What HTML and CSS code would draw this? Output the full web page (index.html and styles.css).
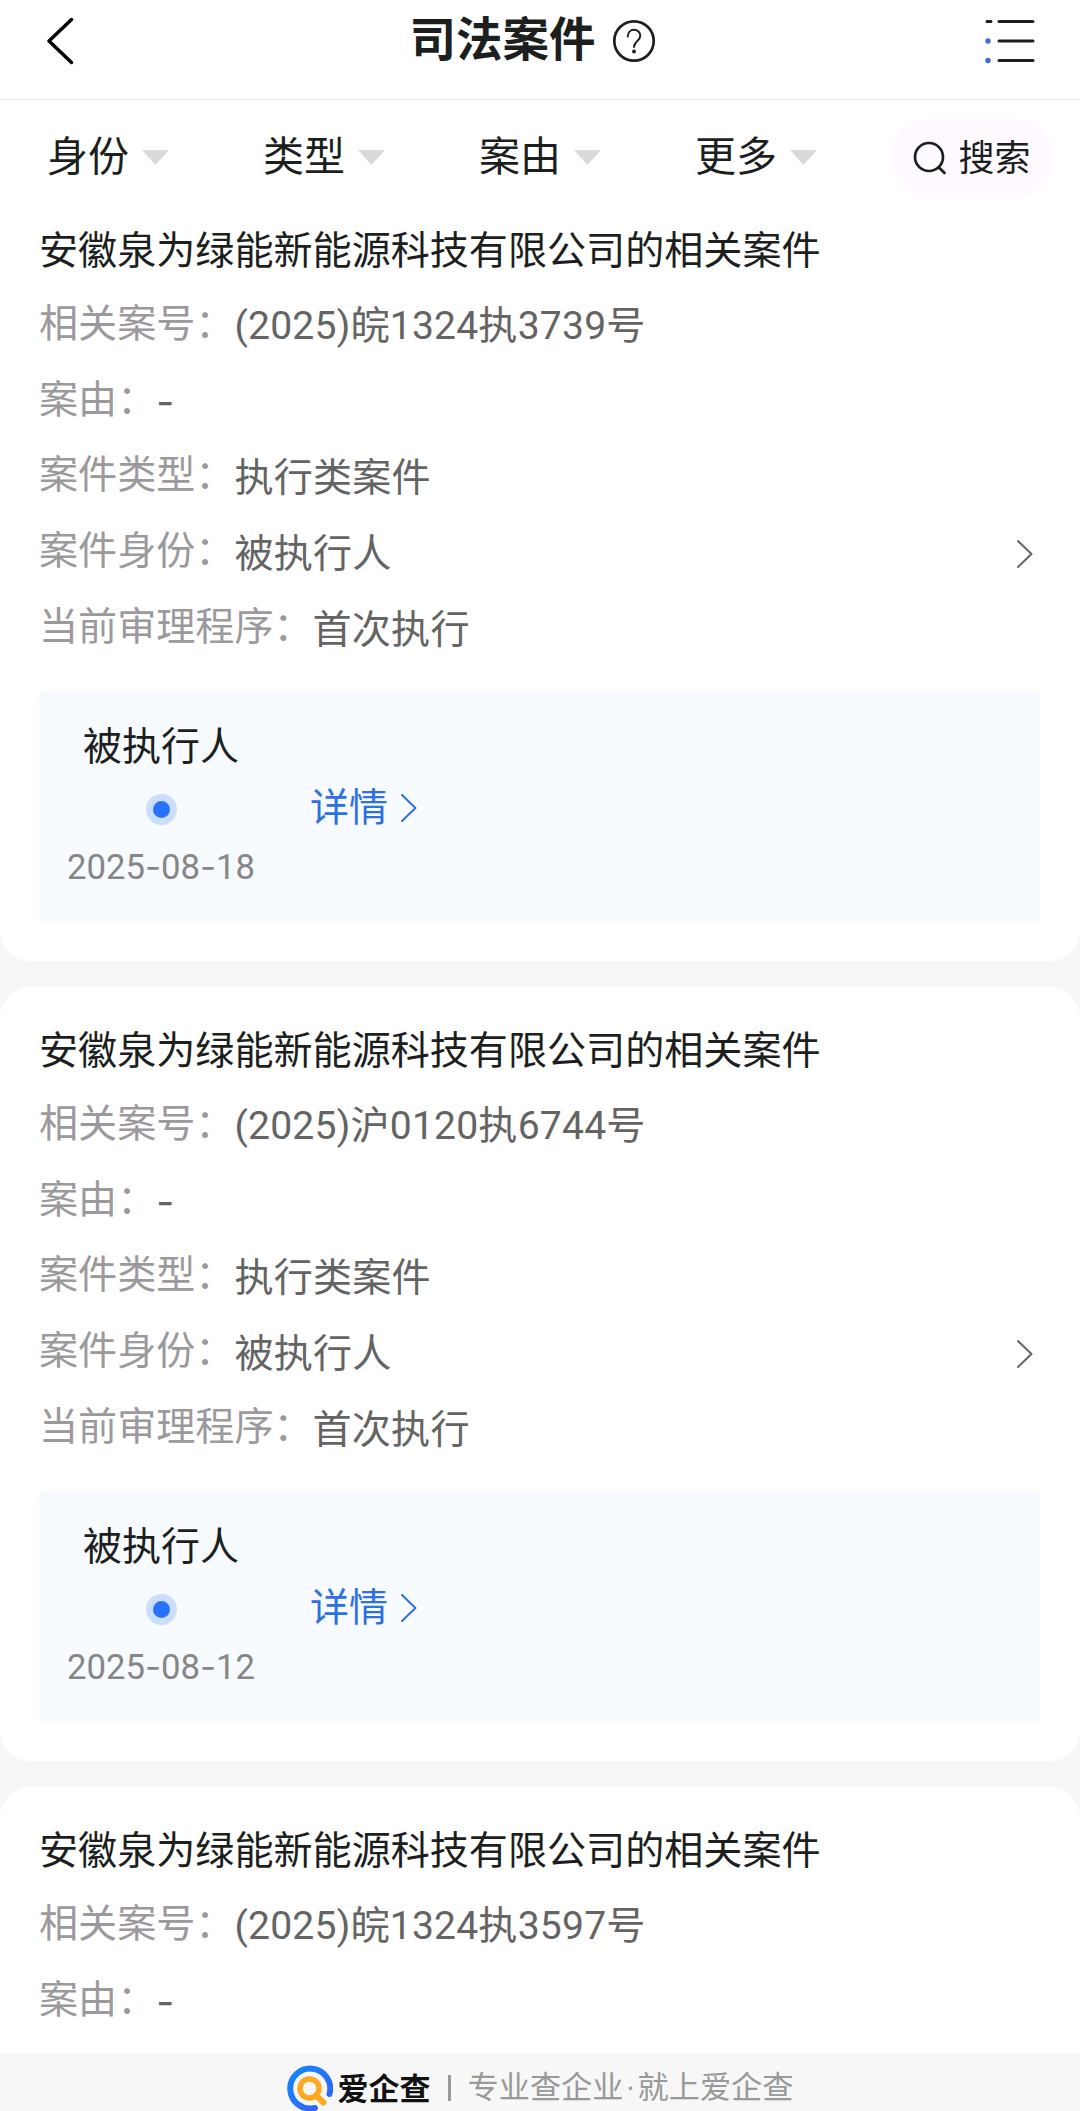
FILE: index.html
```
<!DOCTYPE html>
<html lang="zh-CN">

<head>
    <meta charset="UTF-8">
    <meta name="viewport" content="width=device-width, initial-scale=1.0">
    <title>司法案件</title>
    <link rel="stylesheet" href="styles.css">
</head>

<body>
    <div class="header">
        <svg class="back" viewBox="0 0 28 48"><path d="M25.500 2.500L3 24L25.500 45.500" /></svg>
        <div class="header-title">
            <h1>司法案件</h1>
            <svg class="help" viewBox="0 0 44 44">
                <circle cx="22" cy="22" r="19.700" />
                <path class="thin" d="M15.800 17.500c0-4 2.700-6.700 6.200-6.700s6.300 2.600 6.300 6c0 5-6.300 5.500-6.300 11.200" />
                <circle class="dot" cx="22" cy="32.500" r="2" />
            </svg>
        </div>
        <svg class="menu" viewBox="0 0 52 46">
            <path d="M3 3.500h4M15 3.500h34M15 23h34M15 42.500h34" />
            <circle cx="4" cy="23" r="2.700" />
            <circle cx="4" cy="42.500" r="2.700" />
        </svg>
    </div>

    <div class="filters">
        <div class="filter"><span>身份</span><i class="arrow"></i></div>
        <div class="filter"><span>类型</span><i class="arrow"></i></div>
        <div class="filter"><span>案由</span><i class="arrow"></i></div>
        <div class="filter"><span>更多</span><i class="arrow"></i></div>
        <div class="search">
            <svg viewBox="0 0 34 34"><circle cx="16" cy="16" r="14" /><path d="M26 26.500L31.500 32" /></svg>
            <span>搜索</span>
        </div>
    </div>

    <div class="list">
        <div class="card first">
            <h2>安徽泉为绿能新能源科技有限公司的相关案件</h2>
            <div class="info">
                <div class="row"><span class="label">相关案号：</span><span class="value">(2025)皖1324执3739号</span></div>
                <div class="row"><span class="label">案由：</span><span class="value dash">-</span></div>
                <div class="row"><span class="label">案件类型：</span><span class="value">执行类案件</span></div>
                <div class="row">
                    <span class="label">案件身份：</span><span class="value">被执行人</span>
                    <svg class="go" viewBox="0 0 18 30"><path d="M2 2L15.500 15L2 28" /></svg>
                </div>
                <div class="row"><span class="label">当前审理程序：</span><span class="value">首次执行</span></div>
            </div>
            <div class="panel">
                <div class="step">
                    <span class="step-name">被执行人</span>
                    <i class="step-dot"></i>
                    <span class="step-date">2025<b>-</b>08<b>-</b>18</span>
                </div>
                <div class="detail">详情<svg class="go" viewBox="0 0 18 30"><path d="M2 2L15.500 15L2 28" /></svg></div>
            </div>
        </div>

        <div class="card">
            <h2>安徽泉为绿能新能源科技有限公司的相关案件</h2>
            <div class="info">
                <div class="row"><span class="label">相关案号：</span><span class="value">(2025)沪0120执6744号</span></div>
                <div class="row"><span class="label">案由：</span><span class="value dash">-</span></div>
                <div class="row"><span class="label">案件类型：</span><span class="value">执行类案件</span></div>
                <div class="row">
                    <span class="label">案件身份：</span><span class="value">被执行人</span>
                    <svg class="go" viewBox="0 0 18 30"><path d="M2 2L15.500 15L2 28" /></svg>
                </div>
                <div class="row"><span class="label">当前审理程序：</span><span class="value">首次执行</span></div>
            </div>
            <div class="panel">
                <div class="step">
                    <span class="step-name">被执行人</span>
                    <i class="step-dot"></i>
                    <span class="step-date">2025<b>-</b>08<b>-</b>12</span>
                </div>
                <div class="detail">详情<svg class="go" viewBox="0 0 18 30"><path d="M2 2L15.500 15L2 28" /></svg></div>
            </div>
        </div>

        <div class="card last">
            <h2>安徽泉为绿能新能源科技有限公司的相关案件</h2>
            <div class="info">
                <div class="row"><span class="label">相关案号：</span><span class="value">(2025)皖1324执3597号</span></div>
                <div class="row"><span class="label">案由：</span><span class="value dash">-</span></div>
            </div>
        </div>
    </div>

    <div class="footer">
        <svg class="logo" viewBox="0 0 46 46">
            <defs>
                <linearGradient id="ring" x1="0" y1="0" x2="1" y2="1">
                    <stop offset="0" stop-color="#1288fa" />
                    <stop offset="1" stop-color="#3760f4" />
                </linearGradient>
            </defs>
            <path d="M42.500 29A20 20 0 1 0 28 43" fill="none" stroke="url(#ring)" stroke-width="6" stroke-linecap="round" />
            <circle cx="22.500" cy="23.500" r="9.500" fill="none" stroke="#fba922" stroke-width="5.500" />
            <path d="M29 30.500L36.500 37.500" stroke="#fba922" stroke-width="6" stroke-linecap="round" />
        </svg>
        <span class="brand">爱企查</span>
        <i class="divider"></i>
        <span class="slogan">专业查企业<b>·</b>就上爱企查</span>
    </div>
</body>

</html>
```
FILE: styles.css
```
* {
    box-sizing: border-box;
}

body {
    margin: 0;
    height: 2111px;
    overflow: hidden;
    display: flex;
    flex-direction: column;
    background: #f6f6f6;
    color: #1c1f1e;
    font-family: Roboto, "Noto Sans CJK SC", sans-serif;
}

h1,
h2 {
    margin: 0;
}

svg {
    display: block;
    flex: none;
    fill: none;
    stroke-linecap: round;
    stroke-linejoin: round;
}

.header {
    flex: none;
    height: 100px;
    padding: 0 44px 18px 46px;
    display: flex;
    align-items: center;
    justify-content: space-between;
    background: #fff;
    border-bottom: 1px solid #ebebeb;
}

.back {
    width: 28px;
    height: 48px;
    stroke: #000;
    stroke-width: 3.500;
}

.header-title {
    display: flex;
    align-items: center;
    gap: 16px;
    margin-left: 7px;
}

.header-title h1 {
    padding-bottom: 2px;
    font-size: 46.500px;
    line-height: 60px;
    font-weight: 700;
}

.help {
    width: 44px;
    height: 44px;
    stroke: #1c1f1e;
    stroke-width: 2.700;
}

.help .thin {
    stroke-width: 2;
}

.help .dot {
    fill: #1c1f1e;
    stroke: none;
}

.menu {
    width: 52px;
    height: 46px;
    stroke: #1c1f1e;
    stroke-width: 3;
}

.menu circle {
    fill: #3a70d0;
    stroke: none;
}

.filters {
    flex: none;
    height: 115px;
    padding-left: 47px;
    display: flex;
    align-items: center;
    background: #fff;
}

.filter {
    width: 216px;
    display: flex;
    align-items: center;
    gap: 13px;
    font-size: 41px;
    line-height: 60px;
}

.filter span {
    padding-bottom: 2px;
}

.filter:nth-child(4) {
    width: 195px;
}

.arrow {
    width: 27px;
    height: 15px;
    background: #dcd9dd;
    clip-path: polygon(0 0, 100% 0, 50% 100%);
}

.search {
    width: 164px;
    height: 80px;
    display: flex;
    align-items: center;
    justify-content: center;
    gap: 11px;
    border-radius: 40px;
    background: #fefaff;
    font-size: 36px;
}

.search span {
    padding-bottom: 5px;
}

.search svg {
    width: 34px;
    height: 34px;
    stroke: #1c1f1e;
    stroke-width: 2.700;
}

.list {
    flex: 1;
    min-height: 0;
    overflow: hidden;
    display: flex;
    flex-direction: column;
    gap: 26px;
}

.card {
    flex: none;
    padding: 29px 40px 40px 39px;
    border-radius: 30px;
    background: #fff;
}

.card.first {
    padding-top: 1px;
    border-radius: 0 0 30px 30px;
}

.card.last {
    border-radius: 30px 30px 0 0;
}

.card h2 {
    font-size: 39.100px;
    line-height: 70px;
    font-weight: 400;
}

.info {
    margin-bottom: 27px;
}

.row {
    height: 75.800px;
    display: flex;
    align-items: center;
    font-size: 39.100px;
    line-height: 60px;
}

.label {
    color: #9b999b;
}

.value {
    padding-top: 5px;
    color: #646464;
    letter-spacing: 0.200px;
}

.go {
    width: 18px;
    height: 30px;
    stroke: #666;
    stroke-width: 2;
}

.row .go {
    margin: 6px 6px 0 auto;
}

.dash,
.step-date b {
    font-family: Inter, sans-serif;
    font-weight: 400;
}

.panel {
    height: 229px;
    padding: 25px 28px 0;
    display: flex;
    background: #f7faff;
}

.step {
    width: 188px;
    display: flex;
    flex-direction: column;
    align-items: center;
}

.step-name {
    font-size: 39px;
    line-height: 60px;
}

.step-dot {
    width: 31px;
    height: 31px;
    margin: 17px 0;
    border: 7px solid #ccdeff;
    border-radius: 50%;
    background: #2871fa;
}

.step-date {
    font-size: 34.700px;
    line-height: 48px;
    color: #868686;
    white-space: nowrap;
}

.detail {
    height: 60px;
    margin: 61px 0 0 55px;
    display: flex;
    align-items: center;
    gap: 12px;
    font-size: 39px;
    line-height: 60px;
    color: #2f70e0;
}

.detail .go {
    stroke: #2f70e0;
}

.footer {
    flex: none;
    height: 58px;
    padding-top: 12px;
    display: flex;
    align-items: center;
    justify-content: center;
    background: #f7f7f7;
}

.logo {
    width: 46px;
    height: 46px;
}

.brand {
    margin-left: 5px;
    padding-bottom: 4px;
    font-size: 31px;
    font-weight: 700;
    color: #111;
}

.divider {
    width: 3px;
    height: 26px;
    margin: 0 17px;
    background: #999;
}

.slogan {
    display: flex;
    height: 40px;
    font-size: 31.200px;
    line-height: 40px;
    color: #999;
}

.slogan b {
    width: 14px;
    line-height: 44px;
    text-align: center;
    font-weight: 400;
}
```
